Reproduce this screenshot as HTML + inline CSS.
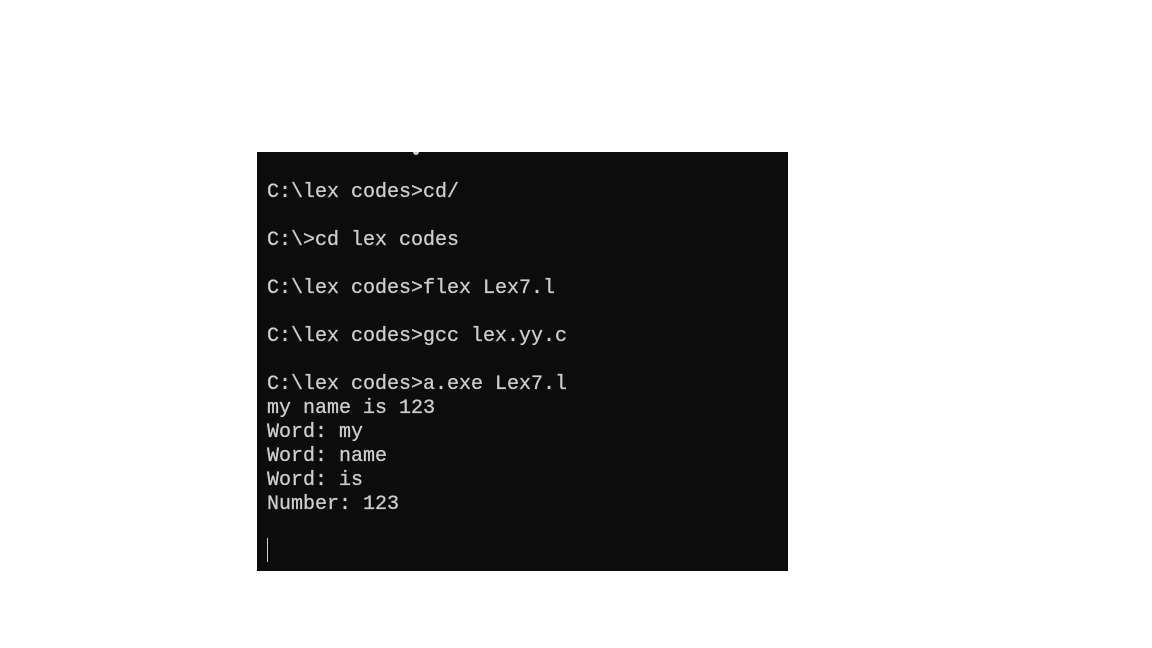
<!DOCTYPE html>
<html><head><meta charset="utf-8"><style>
html,body{margin:0;padding:0;background:#fff;width:1152px;height:648px;overflow:hidden}
.t{position:absolute;left:257px;top:152px;width:531px;height:419px;background:#0c0c0c;overflow:hidden}
pre{position:absolute;left:10px;top:5px;margin:0;font-family:"Liberation Mono",monospace;font-size:20px;line-height:24px;color:#cccccc;-webkit-text-stroke:0.3px #cccccc}
.cur{position:absolute;left:10px;top:386px;width:1px;height:24px;background:#ccc}
.d{position:absolute;left:413px;top:152px;width:6px;height:3px;background:#ccc;border-radius:0 0 3px 3px}
</style></head><body>
<div class="t"><pre>

C:\lex codes&gt;cd/

C:\&gt;cd lex codes

C:\lex codes&gt;flex Lex7.l

C:\lex codes&gt;gcc lex.yy.c

C:\lex codes&gt;a.exe Lex7.l
my name is 123
Word: my
Word: name
Word: is
Number: 123
</pre><div class="cur"></div></div>
<div class="d"></div>
</body></html>
